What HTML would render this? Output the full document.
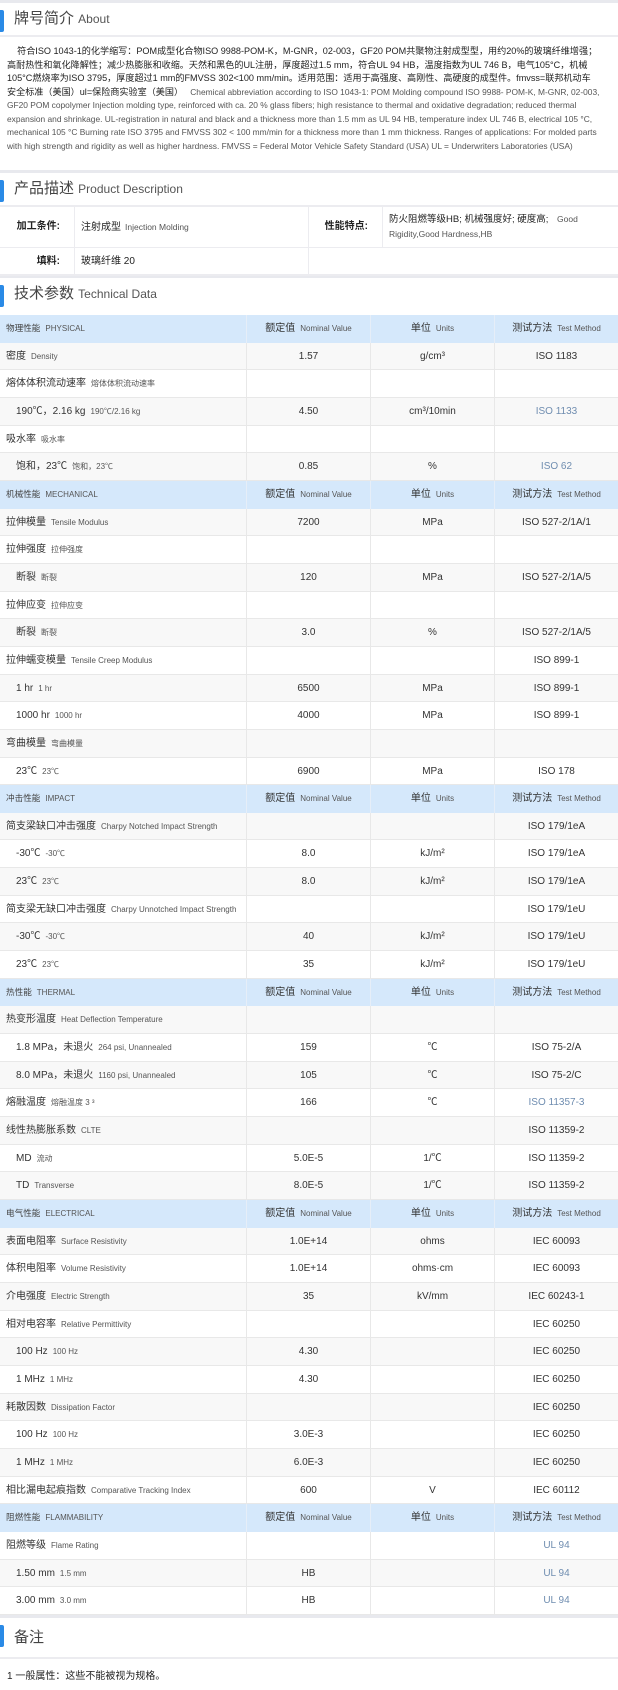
<!DOCTYPE html>
<html><head><meta charset="utf-8"><style>
*{margin:0;padding:0;box-sizing:border-box}
body{width:618px;height:1677px;background:#fff;font-family:"Liberation Sans","Noto Sans CJK SC",sans-serif;color:#333;overflow:hidden;position:relative}
.bar{height:3px;background:#e8e9ee}
.ttl{height:34px;position:relative;border-bottom:2px solid #ececf0;font-size:15px;color:#444;padding-left:14px;line-height:32px}
.ttl:before{content:"";position:absolute;left:0;top:7px;width:4px;height:22px;background:#2a8ae6;border-radius:0 2px 2px 0}
.ttl small{font-size:12px;color:#555}
.p{padding:8px 6px 0 7px;font-size:9.1px;line-height:13.5px;color:#222;white-space:nowrap;overflow:hidden}
.p span{font-size:8.4px;color:#555}
.d{display:flex;border-bottom:2px solid #ececf0;font-size:10px}
.d>div{border-right:1px solid #ececf0}
.k{text-align:right;padding-right:14px;font-weight:bold;color:#222}
.v{padding-left:6px;color:#222}
.v span{font-size:8.5px;color:#555;margin-left:4px}
.r{display:flex;height:27.66px;border-bottom:1px solid #e8e8e8;font-size:10px;color:#333}
.r>div{border-right:1px solid #e8e8e8;text-align:center;white-space:nowrap;line-height:27.5px;overflow:hidden}
.r>div:first-child{text-align:left;padding-left:6px;width:247px}
.r>div:nth-child(2){width:124px}.r>div:nth-child(3){width:124px}.r>div:nth-child(4){width:123px;border-right:0}
.r span{font-size:8px;color:#555;margin-left:5px}
.h{background:#d5e8fb;border-bottom:0}
.h>div{border-right-color:#e6eef8}
.h>div:first-child{font-size:8.6px;color:#444}
.g{background:#f8f8f8}
.s>div:first-child{padding-left:16px}
.b{color:#6f8db0}
</style></head><body>
<div class="bar"></div>
<div class="ttl" style="border-top:0">牌号简介 <small>About</small></div>
<div class="p">&nbsp;&nbsp;&nbsp;&nbsp;符合ISO 1043-1的化学缩写：POM成型化合物ISO 9988-POM-K，M-GNR，02-003，GF20 POM共聚物注射成型型，用约20%的玻璃纤维增强；<br>高耐热性和氧化降解性；减少热膨胀和收缩。天然和黑色的UL注册，厚度超过1.5 mm，符合UL 94 HB，温度指数为UL 746 B，电气105°C，机械<br>105°C燃烧率为ISO 3795，厚度超过1 mm的FMVSS 302&lt;100 mm/min。适用范围：适用于高强度、高刚性、高硬度的成型件。fmvss=联邦机动车<br>安全标准（美国）ul=保险商实验室（美国） <span>&nbsp;&nbsp;Chemical abbreviation according to ISO 1043-1: POM Molding compound ISO 9988- POM-K, M-GNR, 02-003,<br>GF20 POM copolymer Injection molding type, reinforced with ca. 20 % glass fibers; high resistance to thermal and oxidative degradation; reduced thermal<br>expansion and shrinkage. UL-registration in natural and black and a thickness more than 1.5 mm as UL 94 HB, temperature index UL 746 B, electrical 105 °C,<br>mechanical 105 °C Burning rate ISO 3795 and FMVSS 302 &lt; 100 mm/min for a thickness more than 1 mm thickness. Ranges of applications: For molded parts<br>with high strength and rigidity as well as higher hardness. FMVSS = Federal Motor Vehicle Safety Standard (USA) UL = Underwriters Laboratories (USA)</span></div>
<div style="position:absolute;top:170px;left:0;width:618px">
<div class="bar"></div>
<div class="ttl">产品描述 <small>Product Description</small></div>
<div class="d" style="height:41px;border-bottom-width:1px;line-height:40px"><div class="k" style="width:75px">加工条件:</div><div class="v" style="width:234px">注射成型<span>Injection Molding</span></div><div class="k" style="width:74px">性能特点:</div><div class="v" style="width:235px;border:0;line-height:15px;font-size:9.5px;padding-top:5px;white-space:nowrap">防火阻燃等级HB; 机械强度好; 硬度高; <span style="margin-left:6px">Good</span><br><span style="margin-left:0">Rigidity,Good Hardness,HB</span></div></div>
<div class="d" style="height:28px;line-height:27px"><div class="k" style="width:75px">填料:</div><div class="v" style="width:234px">玻璃纤维 20</div><div style="border:0"></div></div>
<div class="bar" style="height:2px"></div>
<div class="ttl" style="border:0">技术参数 <small>Technical Data</small></div>
</div>
<div style="position:absolute;top:315px;left:0;width:618px">
<div class="r h"><div>物理性能<span>PHYSICAL</span></div><div>额定值<span>Nominal Value</span></div><div>单位<span>Units</span></div><div>测试方法<span>Test Method</span></div></div>
<div class="r g"><div>密度<span>Density</span></div><div>1.57</div><div>g/cm³</div><div>ISO 1183</div></div>
<div class="r"><div>熔体体积流动速率<span>熔体体积流动速率</span></div><div></div><div></div><div></div></div>
<div class="r g s"><div>190℃，2.16 kg<span>190℃/2.16 kg</span></div><div>4.50</div><div>cm³/10min</div><div class="b">ISO 1133</div></div>
<div class="r"><div>吸水率<span>吸水率</span></div><div></div><div></div><div></div></div>
<div class="r g s"><div>饱和，23℃<span>饱和，23℃</span></div><div>0.85</div><div>%</div><div class="b">ISO 62</div></div>
<div class="r h"><div>机械性能<span>MECHANICAL</span></div><div>额定值<span>Nominal Value</span></div><div>单位<span>Units</span></div><div>测试方法<span>Test Method</span></div></div>
<div class="r g"><div>拉伸模量<span>Tensile Modulus</span></div><div>7200</div><div>MPa</div><div>ISO 527-2/1A/1</div></div>
<div class="r"><div>拉伸强度<span>拉伸强度</span></div><div></div><div></div><div></div></div>
<div class="r g s"><div>断裂<span>断裂</span></div><div>120</div><div>MPa</div><div>ISO 527-2/1A/5</div></div>
<div class="r"><div>拉伸应变<span>拉伸应变</span></div><div></div><div></div><div></div></div>
<div class="r g s"><div>断裂<span>断裂</span></div><div>3.0</div><div>%</div><div>ISO 527-2/1A/5</div></div>
<div class="r"><div>拉伸蠕变模量<span>Tensile Creep Modulus</span></div><div></div><div></div><div>ISO 899-1</div></div>
<div class="r g s"><div>1 hr<span>1 hr</span></div><div>6500</div><div>MPa</div><div>ISO 899-1</div></div>
<div class="r s"><div>1000 hr<span>1000 hr</span></div><div>4000</div><div>MPa</div><div>ISO 899-1</div></div>
<div class="r g"><div>弯曲模量<span>弯曲模量</span></div><div></div><div></div><div></div></div>
<div class="r s"><div>23℃<span>23℃</span></div><div>6900</div><div>MPa</div><div>ISO 178</div></div>
<div class="r h"><div>冲击性能<span>IMPACT</span></div><div>额定值<span>Nominal Value</span></div><div>单位<span>Units</span></div><div>测试方法<span>Test Method</span></div></div>
<div class="r g"><div>简支梁缺口冲击强度<span>Charpy Notched Impact Strength</span></div><div></div><div></div><div>ISO 179/1eA</div></div>
<div class="r s"><div>-30℃<span>-30℃</span></div><div>8.0</div><div>kJ/m²</div><div>ISO 179/1eA</div></div>
<div class="r g s"><div>23℃<span>23℃</span></div><div>8.0</div><div>kJ/m²</div><div>ISO 179/1eA</div></div>
<div class="r"><div>简支梁无缺口冲击强度<span>Charpy Unnotched Impact Strength</span></div><div></div><div></div><div>ISO 179/1eU</div></div>
<div class="r g s"><div>-30℃<span>-30℃</span></div><div>40</div><div>kJ/m²</div><div>ISO 179/1eU</div></div>
<div class="r s"><div>23℃<span>23℃</span></div><div>35</div><div>kJ/m²</div><div>ISO 179/1eU</div></div>
<div class="r h"><div>热性能<span>THERMAL</span></div><div>额定值<span>Nominal Value</span></div><div>单位<span>Units</span></div><div>测试方法<span>Test Method</span></div></div>
<div class="r g"><div>热变形温度<span>Heat Deflection Temperature</span></div><div></div><div></div><div></div></div>
<div class="r s"><div>1.8 MPa，未退火<span>264 psi, Unannealed</span></div><div>159</div><div>℃</div><div>ISO 75-2/A</div></div>
<div class="r g s"><div>8.0 MPa，未退火<span>1160 psi, Unannealed</span></div><div>105</div><div>℃</div><div>ISO 75-2/C</div></div>
<div class="r"><div>熔融温度<span>熔融温度 3 ³</span></div><div>166</div><div>℃</div><div class="b">ISO 11357-3</div></div>
<div class="r g"><div>线性热膨胀系数<span>CLTE</span></div><div></div><div></div><div>ISO 11359-2</div></div>
<div class="r s"><div>MD<span>流动</span></div><div>5.0E-5</div><div>1/℃</div><div>ISO 11359-2</div></div>
<div class="r g s"><div>TD<span>Transverse</span></div><div>8.0E-5</div><div>1/℃</div><div>ISO 11359-2</div></div>
<div class="r h"><div>电气性能<span>ELECTRICAL</span></div><div>额定值<span>Nominal Value</span></div><div>单位<span>Units</span></div><div>测试方法<span>Test Method</span></div></div>
<div class="r g"><div>表面电阻率<span>Surface Resistivity</span></div><div>1.0E+14</div><div>ohms</div><div>IEC 60093</div></div>
<div class="r"><div>体积电阻率<span>Volume Resistivity</span></div><div>1.0E+14</div><div>ohms·cm</div><div>IEC 60093</div></div>
<div class="r g"><div>介电强度<span>Electric Strength</span></div><div>35</div><div>kV/mm</div><div>IEC 60243-1</div></div>
<div class="r"><div>相对电容率<span>Relative Permittivity</span></div><div></div><div></div><div>IEC 60250</div></div>
<div class="r g s"><div>100 Hz<span>100 Hz</span></div><div>4.30</div><div></div><div>IEC 60250</div></div>
<div class="r s"><div>1 MHz<span>1 MHz</span></div><div>4.30</div><div></div><div>IEC 60250</div></div>
<div class="r g"><div>耗散因数<span>Dissipation Factor</span></div><div></div><div></div><div>IEC 60250</div></div>
<div class="r s"><div>100 Hz<span>100 Hz</span></div><div>3.0E-3</div><div></div><div>IEC 60250</div></div>
<div class="r g s"><div>1 MHz<span>1 MHz</span></div><div>6.0E-3</div><div></div><div>IEC 60250</div></div>
<div class="r"><div>相比漏电起痕指数<span>Comparative Tracking Index</span></div><div>600</div><div>V</div><div>IEC 60112</div></div>
<div class="r h"><div>阻燃性能<span>FLAMMABILITY</span></div><div>额定值<span>Nominal Value</span></div><div>单位<span>Units</span></div><div>测试方法<span>Test Method</span></div></div>
<div class="r"><div>阻燃等级<span>Flame Rating</span></div><div></div><div></div><div class="b">UL 94</div></div>
<div class="r g s"><div>1.50 mm<span>1.5 mm</span></div><div>HB</div><div></div><div class="b">UL 94</div></div>
<div class="r s"><div>3.00 mm<span>3.0 mm</span></div><div>HB</div><div></div><div class="b">UL 94</div></div>
<div class="bar"></div>
<div class="ttl" style="height:41px;line-height:40px">备注</div>
<div style="font-size:10px;padding:8px 7px;color:#222">1 一般属性：这些不能被视为规格。</div>
</div>
</body></html>
